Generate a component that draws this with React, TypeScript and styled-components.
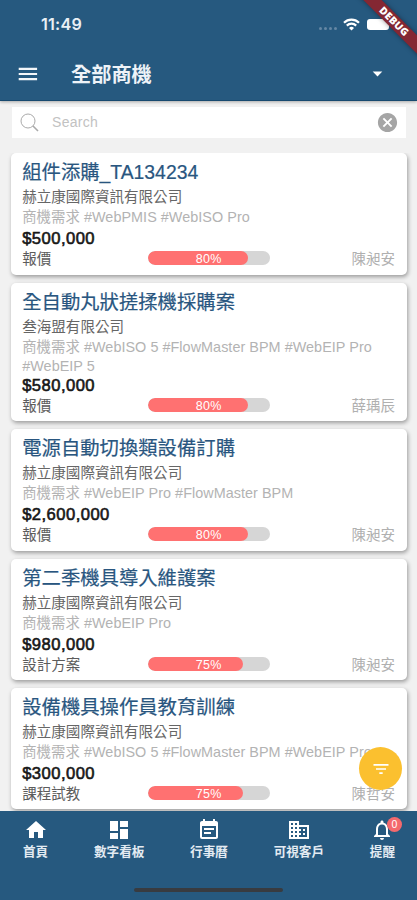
import React from "react";
import styled, { createGlobalStyle } from "styled-components";
import {
  MdArrowDropDown,
  MdBusiness,
  MdCancel,
  MdDashboard,
  MdEventNote,
  MdFilterList,
  MdHome,
  MdNotificationsNone,
} from "react-icons/md";

const blue = "#26597f";
const coral = "#ff7171";

const GlobalStyle = createGlobalStyle`
  * { box-sizing: border-box; }
  body { margin: 0; font-family: "Liberation Sans", "Noto Sans CJK TC", sans-serif; }
  svg { display: block; }
`;

const Screen = styled.div`
  position: relative;
  display: flex;
  flex-direction: column;
  width: 417px;
  height: 900px;
  overflow: hidden;
  background: #f1f1f1;
`;

const Header = styled.header`
  flex: none;
  height: 101px;
  background: ${blue};
  color: #fff;
  border-bottom: 1px solid #17496f;
  box-shadow: 0 1px 3px rgba(0, 0, 0, 0.3);
`;

const StatusBar = styled.div`
  display: flex;
  align-items: center;
  height: 48px;
  padding: 0 28px 0 41px;
`;

const Clock = styled.span`
  flex: 1;
  font: 600 16.2px/20px Inter, sans-serif;
  letter-spacing: 0.2px;
  color: #e9eff5;
`;

const Signal = styled.div`
  display: flex;
  gap: 2px;
  margin: 8px 6px 0 0;
`;

const SignalDot = styled.i`
  width: 3px;
  height: 3px;
  border-radius: 50%;
  background: #6487a4;
`;

const Battery = styled.div`
  width: 22px;
  height: 11px;
  margin-left: 7px;
  border-radius: 3px;
  background: #fff;
`;

const TitleBar = styled.div`
  display: flex;
  align-items: center;
  height: 51px;
  padding: 0 28px 0 18px;
`;

const PageTitle = styled.h1`
  flex: 1;
  margin: 0 0 0 33px;
  font: 700 20.2px/28px "Noto Sans CJK TC", sans-serif;
  color: #eef3f8;
`;

const DebugBanner = styled.div`
  position: absolute;
  top: 15px;
  right: -37px;
  width: 120px;
  height: 13px;
  transform: rotate(45deg);
  background: #842733;
  box-shadow: 0 0 5px rgba(0, 0, 0, 0.4);
  color: #fff;
  font: 800 10.3px/13px "Open Sans", sans-serif;
  letter-spacing: 0.2px;
  text-align: center;
`;

const SearchField = styled.div`
  flex: none;
  display: flex;
  align-items: center;
  height: 31px;
  margin: 6px 11px 15px 12px;
  padding: 0 7px 0 8px;
  background: #fff;
`;

const Placeholder = styled.span`
  flex: 1;
  margin: -2px 0 0 12px;
  font-size: 14px;
  letter-spacing: 0.3px;
  color: #c2c2c2;
`;

const CardList = styled.main`
  flex: 1;
  min-height: 0;
  overflow: hidden;
  display: flex;
  flex-direction: column;
  gap: 8px;
  padding: 0.3px 10px 0 10.5px;
`;

const Card = styled.article`
  flex: none;
  padding: 6px 12px 5.3px 11.7px;
  border-radius: 5px;
  background: #fff;
  box-shadow: 1px 2px 4px rgba(0, 0, 0, 0.36);
`;

const CardTitle = styled.h2`
  height: 28px;
  margin: 0;
  font: 400 19.35px/27px "Liberation Sans", "Noto Sans CJK TC", sans-serif;
  color: #29567f;
  -webkit-text-stroke: 0.2px #29567f;
  white-space: nowrap;
`;

const Company = styled.div`
  height: 20px;
  font-size: 14.55px;
  line-height: 20px;
  color: #666;
`;

const Tags = styled.div`
  font-size: 14.4px;
  line-height: 20.5px;
  letter-spacing: 0.04px;
  color: #b3b3b3;
`;

const TagLine = styled.div`
  height: 20px;
  white-space: nowrap;

  & + & {
    height: 17.5px;
    line-height: 18px;
  }
`;

const Price = styled.div`
  height: 22px;
  font-size: 16.6px;
  line-height: 23px;
  letter-spacing: 0.45px;
  -webkit-text-stroke: 0.6px #171717;
  color: #171717;
`;

const Footer = styled.div`
  display: grid;
  grid-template-columns: 125.5px 122px 1fr;
  align-items: center;
  height: 20px;
  font-size: 14.5px;
  line-height: 20px;
`;

const Stage = styled.span`
  color: #5c5c5c;
`;

const Owner = styled.span`
  text-align: right;
  color: #b0b0b0;
`;

const Track = styled.div`
  display: grid;
  grid-template-rows: 14px;
  height: 14px;
  margin-bottom: 2px;
  border-radius: 7px;
  background: #d6d6d6;
  overflow: hidden;
`;

const Fill = styled.div`
  grid-area: 1 / 1;
  height: 100%;
  border-radius: 7px;
  background: ${coral};
`;

const Percent = styled.span`
  grid-area: 1 / 1;
  font-size: 12.5px;
  line-height: 17px;
  letter-spacing: 0.3px;
  text-align: center;
  color: #fff;
`;

const FilterButton = styled.button`
  position: absolute;
  left: 359px;
  top: 747px;
  display: grid;
  place-items: center;
  width: 43px;
  height: 43px;
  padding: 0;
  border: 0;
  border-radius: 50%;
  background: #fbc02f;
  color: #fff;
`;

const BottomNav = styled.nav`
  position: relative;
  flex: none;
  display: flex;
  justify-content: space-between;
  height: 89px;
  padding: 7px 22px 0 23px;
  background: ${blue};
  color: #fff;
`;

const NavItem = styled.a`
  position: relative;
  display: flex;
  flex-direction: column;
  align-items: center;
  height: 44px;
`;

const NavLabel = styled.span`
  margin-top: -0.5px;
  font: 700 12.6px/18px "Noto Sans CJK TC", sans-serif;
  color: #e3ebf2;
`;

const Badge = styled.span`
  position: absolute;
  top: -1px;
  right: -7px;
  width: 15px;
  height: 15px;
  border-radius: 50%;
  background: #f4696d;
  font-size: 10.5px;
  line-height: 15px;
  text-align: center;
`;

const HomeIndicator = styled.div`
  position: absolute;
  left: 134px;
  bottom: 8px;
  width: 149px;
  height: 4px;
  border-radius: 2px;
  background: #383b40;
`;

type Deal = {
  title: string;
  company: string;
  tags: string[];
  price: string;
  stage: string;
  percent: number;
  owner: string;
};

const deals: Deal[] = [
  { title: "組件添購_TA134234", company: "赫立康國際資訊有限公司", tags: ["商機需求 #WebPMIS #WebISO Pro"], price: "$500,000", stage: "報價", percent: 80, owner: "陳昶安" },
  { title: "全自動丸狀搓揉機採購案", company: "叁海盟有限公司", tags: ["商機需求 #WebISO 5 #FlowMaster BPM #WebEIP Pro", "#WebEIP 5"], price: "$580,000", stage: "報價", percent: 80, owner: "薛瑀辰" },
  { title: "電源自動切換類設備訂購", company: "赫立康國際資訊有限公司", tags: ["商機需求 #WebEIP Pro #FlowMaster BPM"], price: "$2,600,000", stage: "報價", percent: 80, owner: "陳昶安" },
  { title: "第二季機具導入維護案", company: "赫立康國際資訊有限公司", tags: ["商機需求 #WebEIP Pro"], price: "$980,000", stage: "設計方案", percent: 75, owner: "陳昶安" },
  { title: "設備機具操作員教育訓練", company: "赫立康國際資訊有限公司", tags: ["商機需求 #WebISO 5 #FlowMaster BPM #WebEIP Pro"], price: "$300,000", stage: "課程試教", percent: 75, owner: "陳哲安" },
];

const navItems = [
  { label: "首頁", Icon: MdHome },
  { label: "數字看板", Icon: MdDashboard },
  { label: "行事曆", Icon: MdEventNote },
  { label: "可視客戶", Icon: MdBusiness },
  { label: "提醒", Icon: MdNotificationsNone, badge: "0" },
];

function MenuIcon() {
  return (
    <svg width="20" height="14" viewBox="0 0 20 14" stroke="#f3f6f9" strokeWidth="2.2">
      <path d="M.7 1.8h18.4M.7 7h18.4M.7 12.2h18.4" />
    </svg>
  );
}

function WifiIcon() {
  return (
    <svg width="17" height="13" viewBox="0 0 17 13" fill="none" stroke="#fff" strokeWidth="2.2">
      <path d="M1 4.7a10.8 10.8 0 0 1 15 0M3.8 7.6a6.8 6.8 0 0 1 9.4 0" />
      <path d="M8.5 12.5 6 9.9a3.6 3.6 0 0 1 5 0z" fill="#fff" stroke="none" />
    </svg>
  );
}

function SearchIcon() {
  return (
    <svg width="20" height="20" viewBox="0 0 20 20" fill="none" stroke="#aaa">
      <circle cx="8" cy="8" r="7" strokeWidth="1" />
      <path d="m13 13 5 5" strokeWidth="1.6" />
    </svg>
  );
}

function DealCard({ deal }: { deal: Deal }) {
  return (
    <Card>
      <CardTitle>{deal.title}</CardTitle>
      <Company>{deal.company}</Company>
      <Tags>
        {deal.tags.map((line) => (
          <TagLine key={line}>{line}</TagLine>
        ))}
      </Tags>
      <Price>{deal.price}</Price>
      <Footer>
        <Stage>{deal.stage}</Stage>
        <Track>
          <Fill style={{ width: `${deal.percent === 80 ? 82.5 : 78}%` }} />
          <Percent>{deal.percent}%</Percent>
        </Track>
        <Owner>{deal.owner}</Owner>
      </Footer>
    </Card>
  );
}

export default function App() {
  return (
    <Screen>
      <GlobalStyle />
      <Header>
        <StatusBar>
          <Clock>11:49</Clock>
          <Signal>
            <SignalDot />
            <SignalDot />
            <SignalDot />
            <SignalDot />
          </Signal>
          <WifiIcon />
          <Battery />
        </StatusBar>
        <TitleBar>
          <MenuIcon />
          <PageTitle>全部商機</PageTitle>
          <MdArrowDropDown size={23} />
        </TitleBar>
      </Header>
      <SearchField>
        <SearchIcon />
        <Placeholder>Search</Placeholder>
        <MdCancel size={23} color="#a5a5a5" />
      </SearchField>
      <CardList>
        {deals.map((deal) => (
          <DealCard key={deal.title} deal={deal} />
        ))}
      </CardList>
      <BottomNav>
        {navItems.map(({ label, Icon, badge }) => (
          <NavItem key={label}>
            <Icon size={24} />
            <NavLabel>{label}</NavLabel>
            {badge && <Badge>{badge}</Badge>}
          </NavItem>
        ))}
        <HomeIndicator />
      </BottomNav>
      <FilterButton aria-label="filter">
        <MdFilterList size={20} />
      </FilterButton>
      <DebugBanner>DEBUG</DebugBanner>
    </Screen>
  );
}
